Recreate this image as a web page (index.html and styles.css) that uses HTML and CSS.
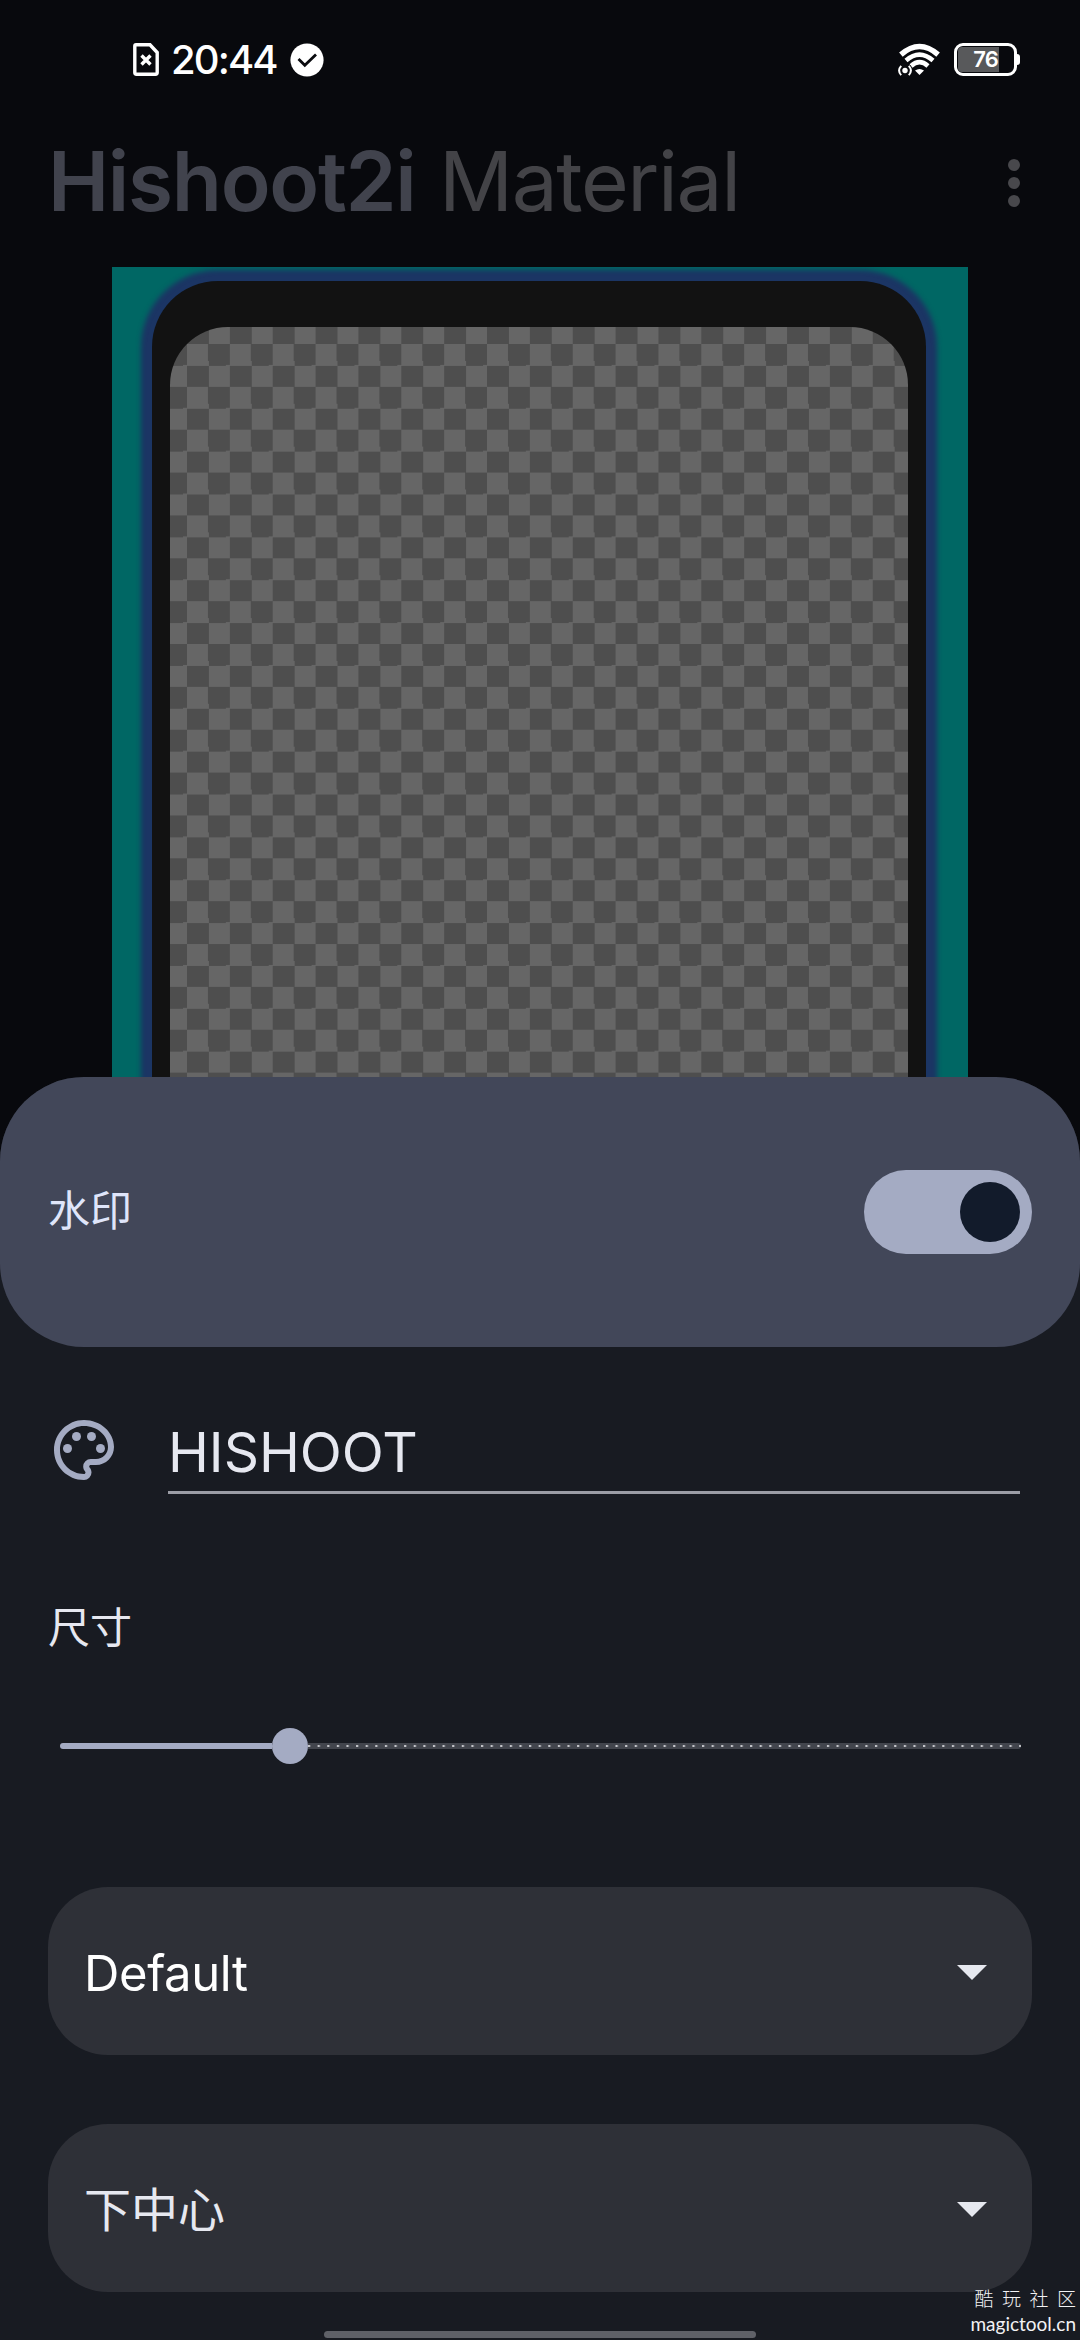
FILE: index.html
```html
<!DOCTYPE html>
<html lang="zh-CN">
<head>
<meta charset="utf-8">
<title>Hishoot2i Material</title>
<link rel="stylesheet" href="styles.css">
</head>
<body>
<div class="screen">
  <div class="status">
    <svg class="sim" width="26" height="33" viewBox="0 0 26 33"><path d="M3 1.8H17L24.2 9.5V29.5Q24.2 31.2 22.5 31.2H3.5Q1.8 31.2 1.8 29.5V3Q1.8 1.8 3 1.8Z" fill="none" stroke="#fff" stroke-width="3.4"/><path d="M8.5 12.5l9 9M17.5 12.5l-9 9" stroke="#fff" stroke-width="3.4"/></svg>
    <span class="time">20:44</span>
    <svg class="check" width="34" height="34" viewBox="0 0 34 34"><circle cx="17" cy="17" r="16.6" fill="#fff"/><path d="M8.500 16l6.300 6.300L26 11.500" fill="none" stroke="#0a0b0f" stroke-width="2.8"/></svg>
    <svg class="wifi" width="42" height="34" viewBox="0 0 42 34">
      <g fill="none" stroke="#fff">
        <path d="M2.9 11.6Q21.5-4.600 40.100 11.600" stroke-width="5.4"/>
        <path d="M8 17.500Q21.500 5.800 35 17.500" stroke-width="4.600"/>
        <path d="M13 23Q21.500 15.400 30 23" stroke-width="4.600"/>
      </g>
      <path d="M17 27.500Q21.500 24.500 26 27.500L21.500 32Z" fill="#fff"/>
      <circle cx="7" cy="27.500" r="7.500" fill="#0a0b0f"/>
      <circle cx="7" cy="27.500" r="2.700" fill="#fff"/>
      <path d="M3.200 22.800Q-1 27.500 3.200 32.200M10.800 22.800Q15 27.500 10.800 32.200" fill="none" stroke="#fff" stroke-width="2"/>
    </svg>
    <div class="battery"><span class="level"></span><span class="pct">76</span></div><span class="nub"></span>
  </div>

  <header class="appbar">
    <h1><b>Hishoot2i</b><span>Material</span></h1>
    <div class="more"><i></i><i></i><i></i></div>
  </header>

  <div class="preview">
    <div class="phone"><div class="checker"></div></div>
  </div>

  <section class="sheet">
    <div class="sheet-head">
      <span class="label">水印</span>
      <div class="switch"><span></span></div>
    </div>
    <div class="field">
      <svg width="72" height="72" viewBox="0 0 24 24" fill="#a4abc3"><path d="M12 22C6.490 22 2 17.510 2 12S6.490 2 12 2s10 4.040 10 9c0 3.310-2.690 6-6 6h-1.770c-.28 0-.5.22-.5.5 0 .12.050.23.130.33.410.47.640 1.060.640 1.670A2.500 2.500 0 0 1 12 22zm0-18c-4.410 0-8 3.590-8 8s3.590 8 8 8c.28 0 .5-.22.5-.5a.54.54 0 0 0-.14-.35c-.41-.46-.63-1.050-.63-1.650a2.500 2.500 0 0 1 2.500-2.500H16c2.210 0 4-1.790 4-4 0-3.860-3.590-7-8-7z"/><circle cx="6.500" cy="11.500" r="1.500"/><circle cx="9.500" cy="7.500" r="1.500"/><circle cx="14.500" cy="7.500" r="1.500"/><circle cx="17.500" cy="11.500" r="1.500"/></svg>
      <div class="input"><span>HISHOOT</span></div>
    </div>
    <div class="label size">尺寸</div>
    <div class="slider"><span class="done"></span><span class="thumb"></span><span class="rest"></span></div>
    <div class="select"><span class="latin">Default</span><i></i></div>
    <div class="select"><span class="cjk">下中心</span><i></i></div>
  </section>

  <div class="homebar"></div>
  <div class="stamp">
    <div class="stamp-cn"><span>酷</span><span>玩</span><span>社</span><span>区</span></div>
    <span class="stamp-url">magictool.cn</span>
  </div>
</div>
</body>
</html>
```
FILE: styles.css
```css
* { box-sizing: border-box; }
body { margin: 0; background: #08090d; }
.screen {
  position: relative;
  width: 1080px;
  height: 2340px;
  overflow: hidden;
  display: flex;
  flex-direction: column;
  background: #08090d;
  color: #e6e8f0;
  font-family: Inter, "Noto Sans CJK SC", sans-serif;
}

/* status bar */
.status {
  flex: none;
  height: 119px;
  padding: 0 60px 0 133px;
  display: flex;
  align-items: center;
  color: #fff;
}
.time { width: 107px; margin-left: 12px; font-size: 40px; line-height: 48px; font-weight: 500; letter-spacing: -1.900px; white-space: nowrap; }
.check { margin-left: 12px; }
.wifi { margin-left: auto; margin-right: 14px; }
.battery {
  position: relative;
  width: 63px;
  height: 33px;
  border: 3px solid #fff;
  border-radius: 9px;
  display: flex;
  align-items: center;
  justify-content: center;
}
.level { position: absolute; left: 1px; top: 1px; width: 41px; height: 25px; border-radius: 4px 0 0 4px; background: #58595b; }
.pct { position: relative; font-size: 22px; line-height: 27px; font-weight: 600; letter-spacing: -1px; }
.nub { width: 3px; height: 11px; border-radius: 0 3px 3px 0; background: #fff; }

/* app bar */
.appbar {
  flex: none;
  height: 148px;
  padding: 0 60px 0 48px;
  display: flex;
  justify-content: space-between;
}
.appbar h1 { display: flex; margin: 13px 0 0; font-size: 82px; line-height: 100px; font-weight: 400; color: #434347; }
.appbar b { width: 391px; font-weight: 600; color: #41434d; letter-spacing: -1.300px; white-space: nowrap; }
.appbar h1 span { letter-spacing: -1.400px; }
.more { display: flex; flex-direction: column; gap: 6px; padding-top: 40px; }
.more i { width: 12px; height: 12px; border-radius: 50%; background: #48484c; }

/* template preview */
.preview {
  flex: none;
  width: 856px;
  height: 933px;
  margin: 0 auto;
  padding: 14px 42px 0 40px;
  overflow: hidden;
  background: #006764;
}
.phone {
  height: 1000px;
  padding: 46px 18px 0;
  border-radius: 66px;
  background: #121212;
  box-shadow: 0 0 5px 11px #1b3564;
}
.checker {
  height: 954px;
  border-radius: 58px 58px 0 0;
  background: repeating-conic-gradient(#4e4e4e 0 25%, #666 0 50%) 17px 17px / 42.860px 42.860px;
}

/* bottom sheet */
.sheet {
  position: relative;
  flex: none;
  height: 1263px;
  margin-top: -123px;
  border-radius: 84px 84px 0 0;
  background: #181b22;
}
.sheet-head {
  height: 270px;
  padding: 0 48px;
  border-radius: 84px;
  background: #424759;
  display: flex;
  align-items: center;
  justify-content: space-between;
}
.label { font-family: "Noto Sans CJK SC", sans-serif; font-size: 42px; line-height: 60px; }
.sheet-head .label { color: #dfe5fa; margin-top: -8px; }
.switch { width: 168px; height: 84px; padding: 12px; border-radius: 42px; background: #a4abc3; display: flex; justify-content: flex-end; }
.switch span { width: 60px; height: 60px; border-radius: 50%; background: #121b2b; }

.field { display: flex; gap: 48px; height: 147px; padding: 67px 60px 0 48px; }
.field svg { flex: none; }
.input { flex: 1; height: 80px; padding-top: 5px; border-bottom: 3px solid #9b9da6; font-size: 55px; line-height: 66px; letter-spacing: 0; }

.size { margin: 101px 48px 0; }
.slider { display: flex; align-items: center; height: 36px; margin: 73px 59px 0 60px; }
.done { width: 212px; height: 6px; border-radius: 3px 0 0 3px; background: #a4abc3; }
.thumb { width: 36px; height: 36px; border-radius: 50%; background: #a4abc3; }
.rest {
  flex: 1;
  height: 6px;
  border-radius: 0 3px 3px 0;
  background: radial-gradient(circle at 1.200px 3px, #c3c4c9 0.900px, transparent 1.500px) 0 0 / 9.620px 6px, #42454d;
}

.select {
  height: 168px;
  margin: 123px 48px 0;
  padding: 0 45px 0 36px;
  border-radius: 60px;
  background: #2e3037;
  display: flex;
  align-items: center;
  justify-content: space-between;
}
.select + .select { margin-top: 69px; }
.select i { width: 30px; height: 15px; margin-top: 3px; background: #e6e8ef; clip-path: polygon(0 0, 100% 0, 50% 100%); }
.latin { color: #fff; font-size: 49px; line-height: 60px; letter-spacing: -0.400px; margin-top: 6px; }
.cjk { font-family: "Noto Sans CJK SC", sans-serif; font-size: 47px; line-height: 70px; margin-top: -3px; }

/* overlays */
.homebar { position: absolute; left: 324px; top: 2331px; width: 432px; height: 7px; border-radius: 4px; background: #5f6168; }
.stamp { position: absolute; right: 4px; bottom: 3px; display: flex; flex-direction: column; align-items: flex-end; color: #f2f2f4; white-space: nowrap; }
.stamp-cn { display: flex; gap: 8.500px; font-family: "Noto Sans CJK SC", sans-serif; font-weight: 300; font-size: 19px; line-height: 26px; }
.stamp-url { font-family: Lato, sans-serif; font-size: 19px; line-height: 26px; }
```
